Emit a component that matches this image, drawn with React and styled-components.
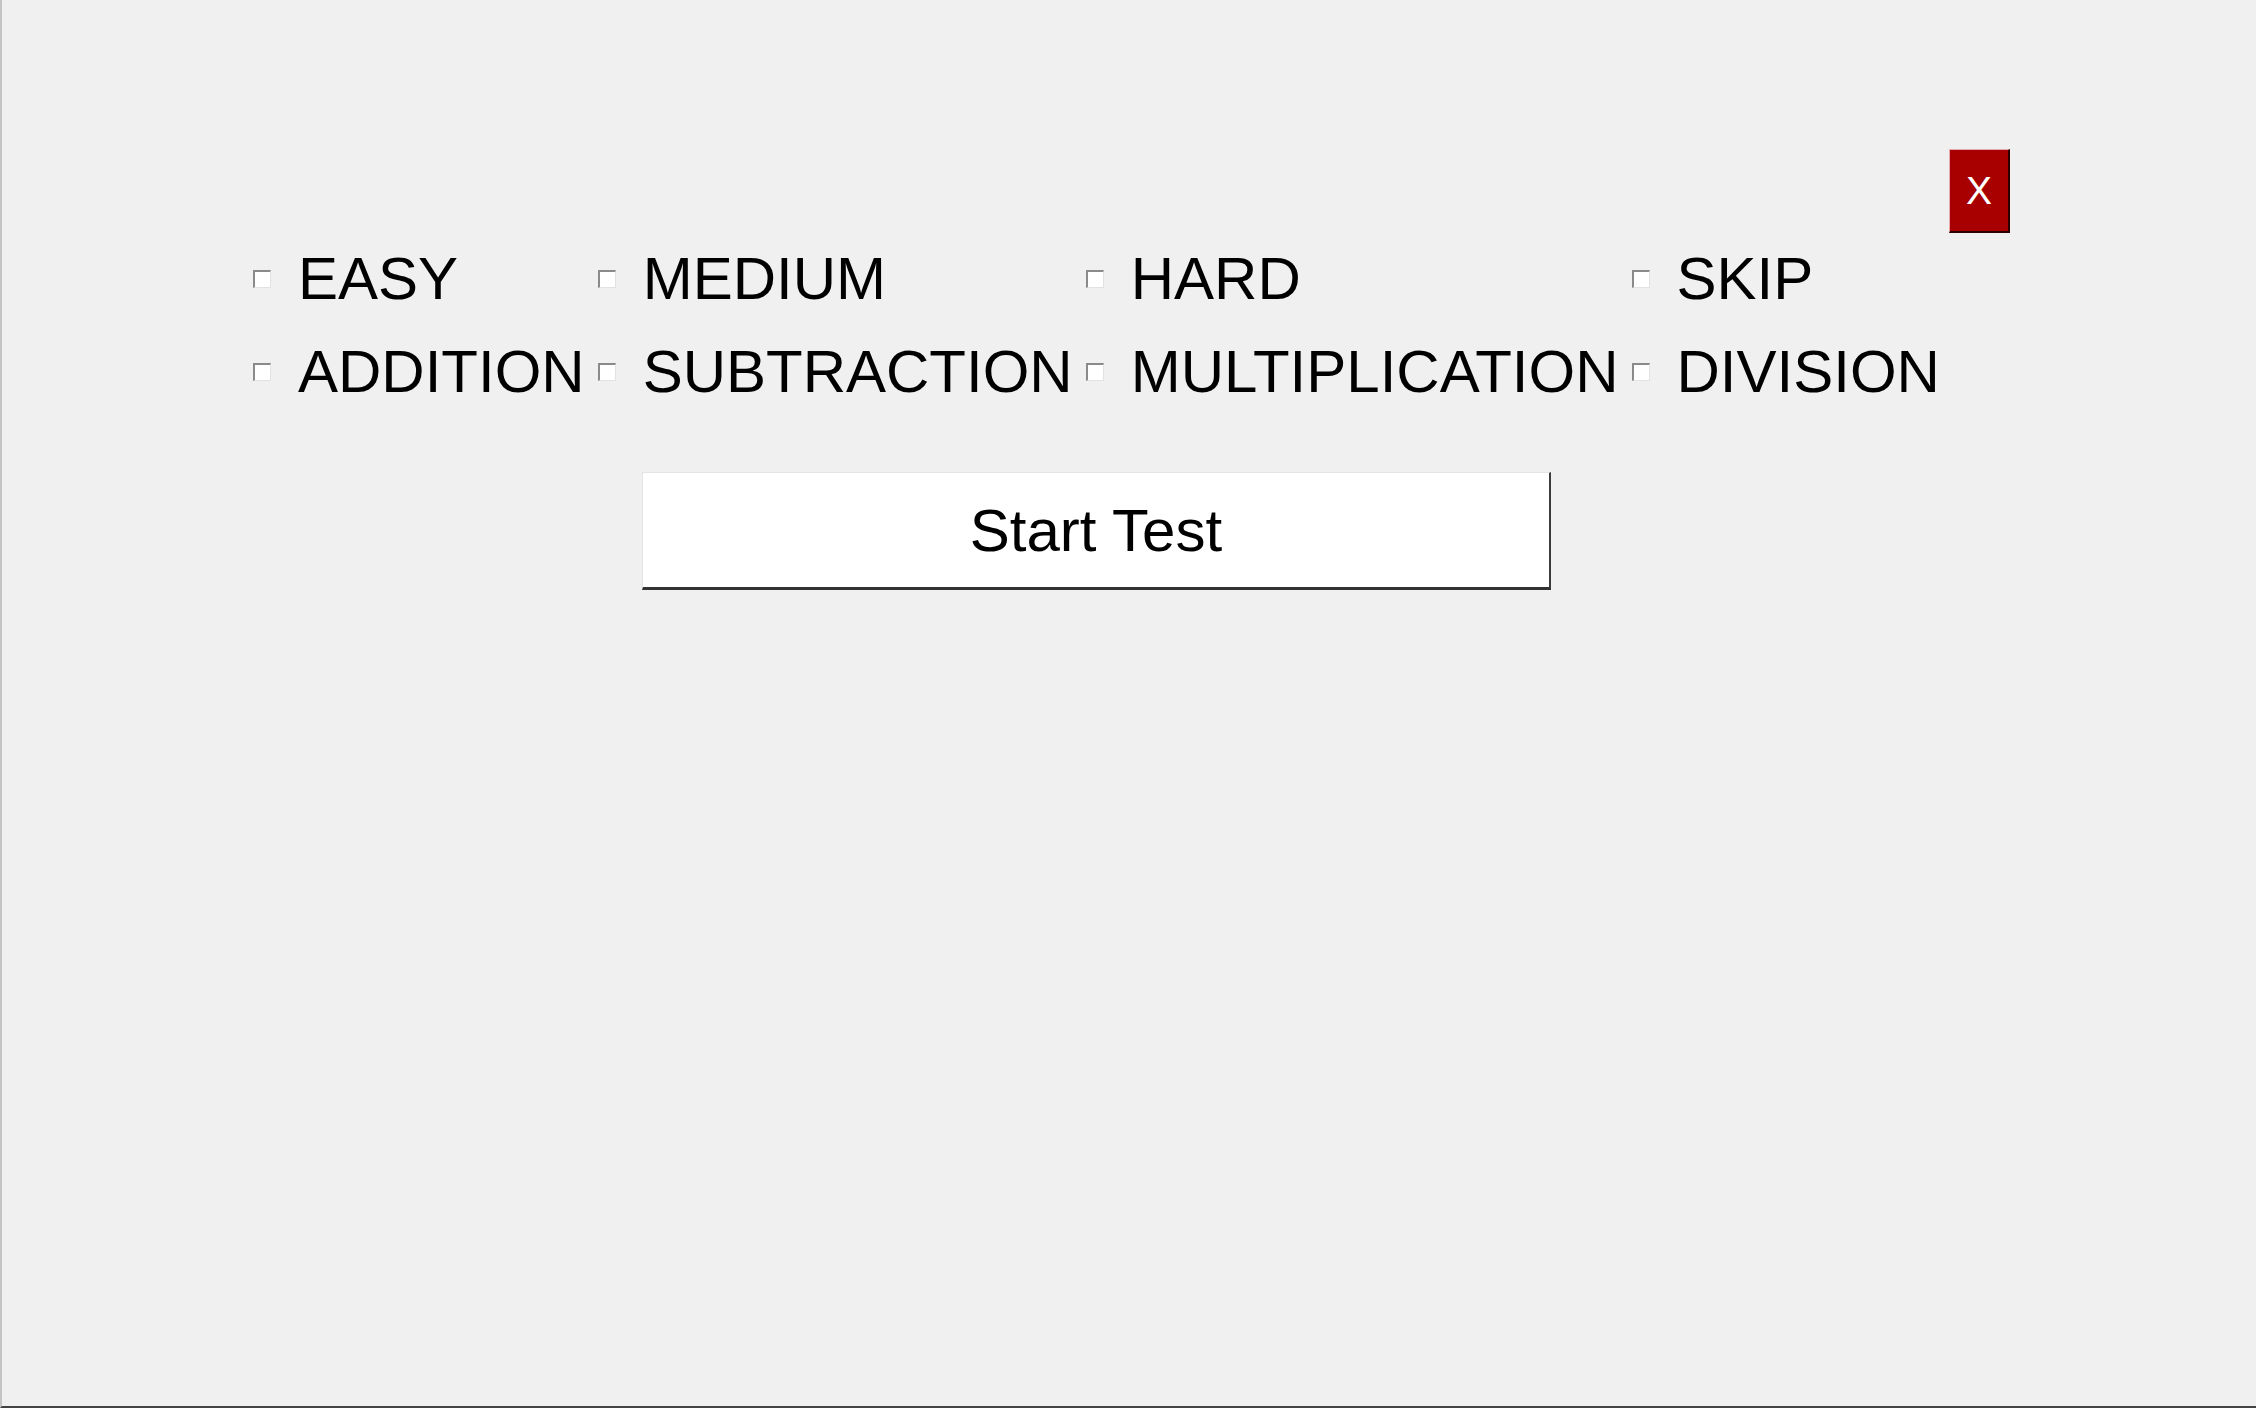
import React from "react";
import styled, { createGlobalStyle } from "styled-components";

const GlobalStyle = createGlobalStyle`
  html, body {
    margin: 0;
    padding: 0;
    background: #f0f0f0;
  }
  body {
    font-family: "Liberation Sans", Arial, sans-serif;
    color: #000;
  }
  * { box-sizing: border-box; }
`;

const Frame = styled.div`
  height: 100vh;
  background: #f0f0f0;
  border-left: 2px solid #c4c4c4;
  border-bottom: 2px solid #444;
  display: flex;
  flex-direction: column;
`;

const TopBar = styled.div`
  display: flex;
  justify-content: flex-end;
  padding: 149px 246px 0 0;
`;

const CloseButton = styled.button`
  width: 61px;
  height: 84px;
  padding: 0;
  background: #a80000;
  color: #fff;
  font-family: "Liberation Sans", Arial, sans-serif;
  font-size: 39px;
  line-height: 1;
  border-top: 1px solid #e7a9a9;
  border-left: 1px solid #e7a9a9;
  border-right: 2px solid #2a0000;
  border-bottom: 2px solid #2a0000;
  display: flex;
  align-items: center;
  justify-content: center;
  cursor: pointer;
`;

const Content = styled.div`
  width: fit-content;
  margin: 11px 0 0 251px;
  display: flex;
  flex-direction: column;
`;

const OptionsGrid = styled.div`
  display: grid;
  grid-template-columns: repeat(4, auto);
  column-gap: 13px;
  row-gap: 24px;
`;

const Option = styled.label`
  display: flex;
  align-items: center;
  gap: 27px;
  font-size: 60px;
  line-height: 69px;
  white-space: nowrap;
  cursor: pointer;
`;

const Box = styled.input`
  appearance: none;
  -webkit-appearance: none;
  margin: 0;
  width: 18px;
  height: 18px;
  flex: none;
  background: #fff;
  border-top: 2px solid #8a8a8a;
  border-left: 2px solid #8a8a8a;
  border-right: 1px solid #e2e2e2;
  border-bottom: 1px solid #e2e2e2;
  &:checked {
    background: #fff radial-gradient(circle, #000 35%, transparent 40%);
  }
`;

const ButtonRow = styled.div`
  display: flex;
  justify-content: center;
  margin-top: 66px;
`;

const StartButton = styled.button`
  width: 909px;
  height: 118px;
  background: #fff;
  color: #000;
  font-family: "Liberation Sans", Arial, sans-serif;
  font-size: 60px;
  padding: 0;
  border-top: 1px solid #e4e4e4;
  border-left: 1px solid #e4e4e4;
  border-right: 2px solid #3c3c3c;
  border-bottom: 3px solid #333;
  cursor: pointer;
`;

const options = [
  "EASY",
  "MEDIUM",
  "HARD",
  "SKIP",
  "ADDITION",
  "SUBTRACTION",
  "MULTIPLICATION",
  "DIVISION",
];

export default function App() {
  return (
    <>
      <GlobalStyle />
      <Frame>
        <TopBar>
          <CloseButton>X</CloseButton>
        </TopBar>
        <Content>
          <OptionsGrid>
            {options.map((o) => (
              <Option key={o}>
                <Box type="checkbox" />
                <span>{o}</span>
              </Option>
            ))}
          </OptionsGrid>
          <ButtonRow>
            <StartButton>Start Test</StartButton>
          </ButtonRow>
        </Content>
      </Frame>
    </>
  );
}
